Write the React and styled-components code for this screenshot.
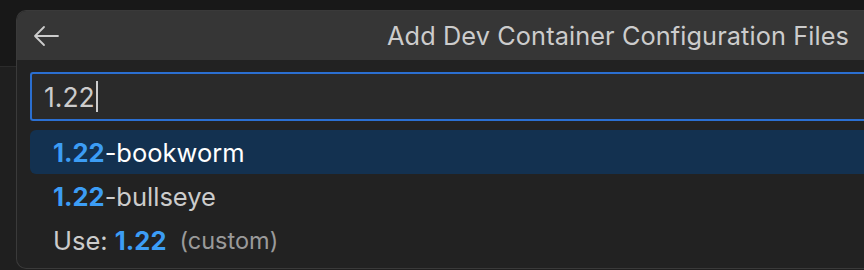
import React from 'react';
import styled, { createGlobalStyle } from 'styled-components';

const GlobalStyle = createGlobalStyle`
  html, body {
    margin: 0;
    padding: 0;
    background: #181818;
  }
  body {
    font-family: Inter, "Noto Sans", sans-serif;
    -webkit-font-smoothing: antialiased;
  }
`;

const Page = styled.div`
  width: 864px;
  height: 270px;
  overflow: hidden;
  display: flex;
  background: linear-gradient(to bottom, #181818 0, #181818 66px, #2b2b2b 66px, #2b2b2b 67px, #1f1f1f 67px);
  padding: 10px 0 0 16px;
  box-sizing: border-box;
`;

const Panel = styled.div`
  flex: 1;
  height: 257px;
  background: #222222;
  border: 1px solid #3a3a3a;
  border-right: none;
  border-radius: 10px 0 0 10px;
  display: flex;
  flex-direction: column;
  overflow: hidden;
`;

const Header = styled.div`
  height: 49px;
  background: #363636;
  display: flex;
  align-items: center;
  justify-content: space-between;
  padding: 0 15px 0 16px;
`;

const BackButton = styled.div`
  width: 26px;
  height: 26px;
  display: flex;
  align-items: center;
  justify-content: center;
  color: #cccccc;
`;

const Title = styled.div`
  color: #cccccc;
  font-size: 25.3px;
  letter-spacing: 0.1px;
`;

const Body = styled.div`
  padding: 12px 0 0 13px;
  display: flex;
  flex-direction: column;
`;

const InputBox = styled.div`
  height: 45px;
  border: 2px solid #2b6fd1;
  border-right: none;
  border-radius: 3px 0 0 3px;
  background: #2a2a2a;
  display: flex;
  align-items: center;
  padding-left: 12px;
  color: #cccccc;
  font-size: 26.5px;
`;

const Caret = styled.span`
  display: inline-block;
  width: 2px;
  height: 31px;
  background: #cccccc;
  margin-left: 1px;
`;

const List = styled.div`
  margin-top: 9px;
  display: flex;
  flex-direction: column;
`;

const Row = styled.div`
  height: 44px;
  display: flex;
  align-items: center;
  padding-left: 23px;
  border-radius: 6px 0 0 6px;
  font-size: 25.5px;
  color: ${p => (p.$active ? '#ffffff' : '#cccccc')};
  background: ${p => (p.$active ? '#133150' : 'transparent')};
`;

const Match = styled.span`
  color: #3c9df5;
  font-weight: 700;
`;

const Hint = styled.span`
  color: #9a9a9a;
  font-size: 23.5px;
  margin-left: 13px;
`;

export default function App() {
  return (
    <>
      <GlobalStyle />
      <Page>
        <Panel>
          <Header>
            <BackButton>
              <svg width="26" height="22" viewBox="0 0 26 22" fill="none">
                <path d="M25 11H2M11 2L2 11L11 20" stroke="currentColor" strokeWidth="1.8" strokeLinecap="round" strokeLinejoin="round" />
              </svg>
            </BackButton>
            <Title>Add Dev Container Configuration Files</Title>
          </Header>
          <Body>
            <InputBox>
              1.22<Caret />
            </InputBox>
            <List>
              <Row $active>
                <Match>1.22</Match>-bookworm
              </Row>
              <Row>
                <Match>1.22</Match>-bullseye
              </Row>
              <Row>
                Use:&nbsp;<Match>1.22</Match>
                <Hint>(custom)</Hint>
              </Row>
            </List>
          </Body>
        </Panel>
      </Page>
    </>
  );
}
